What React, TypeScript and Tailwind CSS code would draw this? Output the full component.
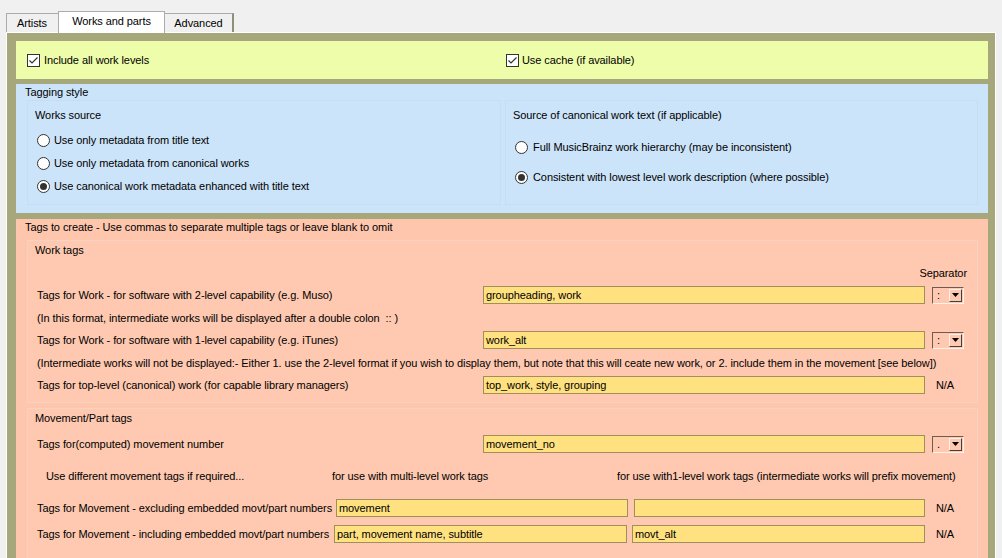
import React from "react";

function CheckBox() {
  return (
    <span className="w-[13px] h-[13px] border border-[#333333] bg-white flex items-center justify-center shrink-0">
      <svg width="11" height="11" viewBox="0 0 11 11">
        <path d="M1.5 5.5 L4 8 L9.5 2.5" fill="none" stroke="#333333" strokeWidth="1.2" />
      </svg>
    </span>
  );
}

function Radio({ checked }: { checked?: boolean }) {
  return (
    <span className="w-[13px] h-[13px] rounded-full border border-[#333333] bg-white flex items-center justify-center shrink-0">
      {checked && <span className="w-[7px] h-[7px] rounded-full bg-[#333333]" />}
    </span>
  );
}

function Input({ value, w }: { value: string; w: string }) {
  return (
    <div
      className={`${w} h-[18px] border border-[#a08f5e] bg-[#ffe180] flex items-center pl-[2px] shrink-0 whitespace-nowrap overflow-hidden`}
    >
      {value}
    </div>
  );
}

function Combo({ value }: { value: string }) {
  return (
    <div className="w-[32px] h-[17px] flex items-center border border-t-[#6e5c52] border-l-[#6e5c52] border-b-[#fff0e8] border-r-[#fff0e8] shrink-0">
      <span className="pl-[4px] w-[16px]">{value}</span>
      <span className="ml-auto mr-[1px] w-[13px] h-[13px] border border-t-[#fff0e8] border-l-[#fff0e8] border-b-[#404040] border-r-[#404040] flex items-center justify-center">
        <svg width="7" height="4" viewBox="0 0 7 4">
          <path d="M0 0 H7 L3.5 4 Z" fill="#000" />
        </svg>
      </span>
    </div>
  );
}

function NA() {
  return <div className="w-[32px] pl-[4px] shrink-0">N/A</div>;
}

function Row({ label, children }: { label: string; children: React.ReactNode }) {
  return (
    <div className="h-[18px] flex items-center pl-[9px] pr-[13px]">
      <span className="flex-1 whitespace-nowrap">{label}</span>
      {children}
    </div>
  );
}

export default function App() {
  return (
    <div className="w-[1002px] h-[558px] bg-[#f0f0f0] overflow-hidden text-[11px] leading-[14px] tracking-[-0.08px] text-black font-['Liberation_Sans',Arial,sans-serif] flex flex-col">
      {/* Tabs */}
      <div className="flex items-end h-[33px] pl-[6px] shrink-0">
        <div className="w-[53px] h-[19px] border border-b-0 border-[#acacac] bg-[#f0f0f0] flex items-center pl-[10px] mb-px">
          Artists
        </div>
        <div className="w-[107px] h-[22px] border border-b-0 border-[#acacac] bg-white flex items-center justify-center -ml-px relative z-10 pb-[3px]">
          Works and parts
        </div>
        <div className="w-[70px] h-[19px] border border-b-0 border-[#acacac] border-r-[#8f8f7a] border-r-2 bg-[#f0f0f0] flex items-center justify-center -ml-px mb-px">
          Advanced
        </div>
      </div>

      {/* Pane */}
      <div className="flex-1 mx-[6px] -mt-px border border-white bg-[#a6a77b] pt-[8px] pl-[9px] pr-[7px] flex flex-col">
        {/* Yellow */}
        <div className="h-[38px] bg-[#eefdaa] flex items-center pl-[11px] shrink-0">
          <div className="w-[479px] flex items-center gap-[4px]">
            <CheckBox />
            <span>Include all work levels</span>
          </div>
          <div className="flex items-center gap-[3px]">
            <CheckBox />
            <span>Use cache (if available)</span>
          </div>
        </div>

        {/* Blue */}
        <div className="mt-[5px] h-[129px] bg-[#cce4f9] shrink-0 pt-[1px]">
          <div className="pl-[9px]">Tagging style</div>
          <div className="flex pl-[11px] pt-[1px]">
            <div className="w-[474px] h-[105px] border border-[#c6def3] pt-[7px] pl-[7px]">
              <div>Works source</div>
              <div className="mt-[11px] flex flex-col gap-[9px] pl-[2px]">
                <div className="flex items-center gap-[4px] h-[14px]">
                  <Radio />
                  <span>Use only metadata from title text</span>
                </div>
                <div className="flex items-center gap-[4px] h-[14px]">
                  <Radio />
                  <span>Use only metadata from canonical works</span>
                </div>
                <div className="flex items-center gap-[4px] h-[14px]">
                  <Radio checked />
                  <span>Use canonical work metadata enhanced with title text</span>
                </div>
              </div>
            </div>
            <div className="ml-[4px] w-[473px] h-[105px] border border-[#c6def3] pt-[7px] pl-[7px]">
              <div>Source of canonical work text (if applicable)</div>
              <div className="mt-[18px] flex flex-col gap-[16px] pl-[2px]">
                <div className="flex items-center gap-[5px] h-[14px]">
                  <Radio />
                  <span>Full MusicBrainz work hierarchy (may be inconsistent)</span>
                </div>
                <div className="flex items-center gap-[5px] h-[14px]">
                  <Radio checked />
                  <span>Consistent with lowest level work description (where possible)</span>
                </div>
              </div>
            </div>
          </div>
        </div>

        {/* Salmon */}
        <div className="mt-[6px] flex-1 bg-[#fec7ad] pt-[1px]">
          <div className="pl-[9px]">Tags to create - Use commas to separate multiple tags or leave blank to omit</div>

          <div className="ml-[11px] mr-[10px] mt-[6px] h-[163px] border border-[#f8d2c0] bg-[#fec9b0] pt-[2px]">
            <div className="pl-[7px]">Work tags</div>
            <div className="flex justify-end pr-[10px] mt-[9px]">Separator</div>
            <div className="mt-[6px]">
              <Row label="Tags for Work - for software with 2-level capability (e.g. Muso)">
                <Input value="groupheading, work" w="w-[442px]" />
                <div className="w-[7px]" />
                <Combo value=":" />
              </Row>
            </div>
            <div className="mt-[5px] h-[18px] flex items-center pl-[9px]">
              (In this format, intermediate works will be displayed after a double colon&nbsp; :: )
            </div>
            <div className="mt-[4px]">
              <Row label="Tags for Work - for software with 1-level capability (e.g. iTunes)">
                <Input value="work_alt" w="w-[442px]" />
                <div className="w-[7px]" />
                <Combo value=":" />
              </Row>
            </div>
            <div className="mt-[5px] h-[18px] flex items-center pl-[9px] whitespace-nowrap">
              (Intermediate works will not be displayed:- Either 1. use the 2-level format if you wish to display them, but note that this will ceate new work, or 2. include them in the movement [see below])
            </div>
            <div className="mt-[4px]">
              <Row label="Tags for top-level (canonical) work (for capable library managers)">
                <Input value="top_work, style, grouping" w="w-[442px]" />
                <div className="w-[7px]" />
                <NA />
              </Row>
            </div>
          </div>

          <div className="ml-[11px] mr-[10px] mt-[5px] h-[160px] border border-[#f8d2c0] bg-[#fec9b0] pt-[2px]">
            <div className="pl-[7px]">Movement/Part tags</div>
            <div className="mt-[10px]">
              <Row label="Tags for(computed) movement number">
                <Input value="movement_no" w="w-[442px]" />
                <div className="w-[7px]" />
                <Combo value="." />
              </Row>
            </div>
            <div className="mt-[16px] flex pl-[18px] whitespace-nowrap">
              <span className="w-[286px]">Use different movement tags if required...</span>
              <span className="w-[285px]">for use with multi-level work tags</span>
              <span>for use with1-level work tags (intermediate works will prefix movement)</span>
            </div>
            <div className="mt-[16px]">
              <Row label="Tags for Movement - excluding embedded movt/part numbers">
                <Input value="movement" w="w-[292px]" />
                <div className="w-[6px]" />
                <Input value="" w="w-[291px]" />
                <div className="w-[7px]" />
                <NA />
              </Row>
            </div>
            <div className="mt-[8px]">
              <Row label="Tags for Movement - including embedded movt/part numbers">
                <Input value="part, movement name, subtitle" w="w-[293px]" />
                <div className="w-[5px]" />
                <Input value="movt_alt" w="w-[293px]" />
                <div className="w-[7px]" />
                <NA />
              </Row>
            </div>
          </div>
        </div>
      </div>
    </div>
  );
}
